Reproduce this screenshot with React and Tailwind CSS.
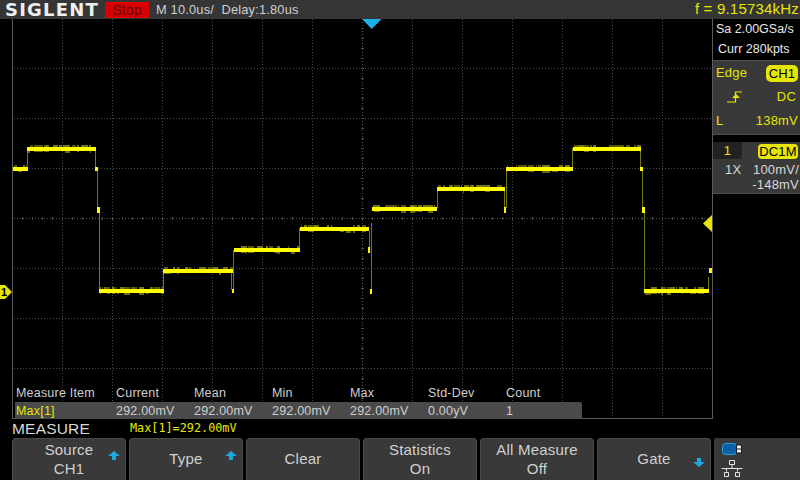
const softkeys = [
  { top: 'Source', bottom: 'CH1', arrow: 'up' },
  { top: 'Type', arrow: 'up' },
  { top: 'Clear' },
  { top: 'Statistics', bottom: 'On' },
  { top: 'All Measure', bottom: 'Off' },
  { top: 'Gate', arrow: 'down' },
]

const measures = [
  { w: 'w-[100px]', head: 'Measure Item', value: 'Max[1]', yellow: true },
  { w: 'w-[78px]', head: 'Current', value: '292.00mV' },
  { w: 'w-[78px]', head: 'Mean', value: '292.00mV' },
  { w: 'w-[78px]', head: 'Min', value: '292.00mV' },
  { w: 'w-[78px]', head: 'Max', value: '292.00mV' },
  { w: 'w-[78px]', head: 'Std-Dev', value: '0.00yV' },
  { w: 'w-[60px]', head: 'Count', value: '1' },
]

// bright parts of the trace: [x1, x2, top, height]
const levels = [
  [13, 28, 167, 4], [27, 96, 147, 4], [95, 98, 167, 4], [97, 100, 207, 6], [99, 164, 289, 4],
  [163, 233, 269, 4], [232, 234, 289, 4], [234, 300, 248, 4], [300, 369, 227, 4], [368, 370, 247, 6],
  [370, 372, 289, 5], [372, 437, 207, 4], [437, 505, 187, 4], [504, 506, 207, 6], [506, 573, 167, 4],
  [573, 641, 147, 4], [640, 643, 167, 4], [642, 645, 207, 6], [644, 709, 289, 4], [709, 712, 268, 5],
]

// dim vertical edges: [x, y1, y2]
const edges = [
  [27, 147, 170], [95, 147, 168], [97, 168, 208], [99, 208, 290], [163, 270, 290], [231, 273, 290],
  [233, 250, 290], [299, 228, 250], [369, 231, 248], [371, 223, 290], [437, 188, 208], [504, 190, 208],
  [506, 168, 208], [572, 148, 168], [640, 148, 168], [642, 170, 208], [644, 208, 290], [708, 277, 290],
]

// fake acquisition noise, same every render
function noise() {
  const out = []
  let seed = 7
  const next = () => {
    seed = (seed * 9301 + 49297) % 233280
    return seed / 233280
  }
  levels.forEach(([x1, x2, top, h]) => {
    if (x2 - x1 < 8) return
    let x = x1 + 1
    while (x < x2 - 1) {
      const w = Math.min(1 + Math.floor(next() * 6), x2 - x)
      if (next() > 0.2) out.push([x, top - 2, w, 2, next() > 0.5 ? '#77770f' : '#55550c'])
      if (next() > 0.6) out.push([x, top + h, w, next() > 0.6 ? 2 : 1, '#66660d'])
      x += w + Math.floor(next() * 3)
    }
  })
  return out
}

const specks = noise()

function Grid() {
  const vert = [62, 112, 162, 212, 262, 312, 412, 462, 512, 562, 612, 662]
  const horiz = [68, 118, 168, 268, 318, 368]
  const ticksX = Array.from({ length: 69 }, (_, i) => 22 + i * 10)
  const ticksY = Array.from({ length: 39 }, (_, i) => 28 + i * 10)
  return (
    <svg width="800" height="480" className="block">
      {vert.map(x => (
        <line key={x} x1={x + 0.5} x2={x + 0.5} y1="19" y2="418" stroke="#484848" strokeDasharray="1 2" />
      ))}
      {horiz.map(y => (
        <line key={y} x1="14" x2="712" y1={y + 0.5} y2={y + 0.5} stroke="#484848" strokeDasharray="1 2" />
      ))}
      <line x1="14" x2="712" y1="218.500" y2="218.500" stroke="#505050" strokeDasharray="1 2" />
      <line x1="362.500" x2="362.500" y1="19" y2="418" stroke="#505050" strokeDasharray="1 2" />
      {ticksX.map(x => (
        <rect key={x} x={x} y="217" width="1" height="3" fill="#484848" />
      ))}
      {ticksY.map(y => (
        <rect key={y} x="361" y={y} width="3" height="1" fill="#484848" />
      ))}
      {edges.map(([x, y1, y2], i) => (
        <rect key={i} x={x} y={y1} width="1" height={y2 - y1} fill="#77770f" />
      ))}
      {specks.map(([x, y, w, h, c], i) => (
        <rect key={i} x={x} y={y} width={w} height={h} fill={c} />
      ))}
      {levels.map(([x1, x2, top, h], i) => (
        <rect key={i} x={x1} y={top} width={x2 - x1} height={h} fill="#ffff00" />
      ))}
      <path d="M362 19h19.500l-9.750 10z" fill="#1cb0e8" />
      <path d="M712 215v17l-9-8.500z" fill="#e6e600" />
      <path d="M0 285h5l7 7-7 7H0z" fill="#e6e600" />
      <text x="1" y="296" fontSize="11" fontWeight="700" fontFamily="Liberation Sans, sans-serif" fill="#000">1</text>
    </svg>
  )
}

function Arrow({ dir }) {
  if (dir === 'up') {
    return (
      <svg width="12" height="9" viewBox="0 0 12 9" className="absolute right-[5px] top-[12px]">
        <path d="M6 0l6 5H8v4H4V5H0z" fill="#1ea7df" />
      </svg>
    )
  }
  return (
    <svg width="12" height="9" viewBox="0 0 12 9" className="absolute right-[5px] top-[19px]">
      <path d="M6 9l6-5H8V0H4v4H0z" fill="#1ea7df" />
    </svg>
  )
}

function Softkey({ top, bottom, arrow }) {
  return (
    <div className="relative w-[114px] h-[42px] pb-[2px] bg-[#393939] rounded-t-[4px] border border-b-0 border-[#4a4a4a] flex flex-col items-center justify-center text-[15px] leading-[19px] text-[#d0d0d0]">
      <span>{top}</span>
      {bottom && <span>{bottom}</span>}
      {arrow && <Arrow dir={arrow} />}
    </div>
  )
}

export default function App() {
  return (
    <div className="relative w-[800px] h-[480px] overflow-hidden bg-black text-[#d8d8d8] font-['Liberation_Sans',sans-serif] tracking-[0.2px]">
      {/* waveform canvas */}
      <div className="absolute inset-0">
        <Grid />
      </div>

      <div className="relative w-[800px] h-[480px] flex flex-col">
        {/* header */}
        <div className="h-[19px] shrink-0 bg-[#353535] flex items-center">
          <span className="ml-[5px] w-[100px] text-[18px] leading-[19px] font-bold text-[#eeeeee] tracking-[1.200px] font-['DejaVu_Sans',sans-serif]">SIGLENT</span>
          <span className="w-[44px] h-[16px] bg-[#d80000] text-[#5a0000] text-[14px] leading-[16px] text-center">Stop</span>
          <span className="ml-[7px] text-[12.8px] text-[#d0d0d0] whitespace-pre">M 10.0us/  Delay:1.80us</span>
          <span className="ml-auto mr-[1px] text-[15px] text-[#e6e600]">f = 9.15734kHz</span>
        </div>

        <div className="h-[400px] shrink-0 flex">
          <div className="flex-1 flex flex-col">
            <div className="flex-1 ml-[12px] w-[701px] border-l border-r border-b border-[#5a5a5a] flex flex-col justify-end">
              <div className="flex text-[12.5px] leading-[17px] pl-[3px] text-[#cfcfcf]">
                {measures.map(m => (
                  <span key={m.head} className={`${m.w} shrink-0`}>{m.head}</span>
                ))}
              </div>
              <div className="flex text-[12.5px] leading-[19px] ml-[2px] pl-[1px] w-[567px] h-[17px] -mb-px bg-[#4a4a4a] rounded-tr-[2px]">
                {measures.map(m => (
                  <span key={m.head} className={`${m.w} shrink-0 ${m.yellow ? 'text-[#e6e600]' : 'text-[#cfcfcf]'}`}>{m.value}</span>
                ))}
              </div>
            </div>
          </div>

          {/* right side panels */}
          <div className="w-[87px] flex flex-col bg-black">
            <div className="h-[41px] text-[12.5px] leading-[20px] text-[#e8e8e8] pl-[3px] tracking-normal">
              <div>Sa 2.00GSa/s</div>
              <div className="pl-[2px]">Curr 280kpts</div>
            </div>
            <div className="h-[75px] bg-[#393939] border-t border-b border-[#4f4f4f] text-[#e6e600] text-[13px]">
              <div className="flex justify-between items-center h-[24px] pl-[3px] pr-[2px]">
                <span>Edge</span>
                <span className="w-[32px] h-[17px] bg-[#e6e600] text-black rounded-[5px] text-center leading-[17px]">CH1</span>
              </div>
              <div className="flex justify-between items-center h-[24px] pr-[4px]">
                <svg width="16" height="12" viewBox="0 0 16 12" className="ml-[14px]">
                  <path d="M0 11h8.500V1H15" fill="none" stroke="#e6e600" strokeWidth="1.200" />
                  <path d="M5 7h8L9 3z" fill="#e6e600" />
                </svg>
                <span>DC</span>
              </div>
              <div className="flex justify-between items-center h-[24px] pl-[3px] pr-[2px]">
                <span>L</span>
                <span>138mV</span>
              </div>
            </div>
            <div className="h-[7px] shrink-0" />
            <div className="h-[52px] bg-[#393939] border-b border-[#4f4f4f] text-[13px] leading-[15px]">
              <div className="flex h-[18px] items-start">
                <span className="w-[29px] h-[17px] bg-[#222222] text-[#e6e600] text-center leading-[17px] rounded-br-[3px]">1</span>
                <span className="ml-auto mt-[2px] mr-[2px] w-[40px] h-[15px] bg-[#e6e600] text-black rounded-[4px] text-center">DC1M</span>
              </div>
              <div className="flex justify-between pl-[12px] pr-[1px] pt-[2px]">
                <span>1X</span>
                <span>100mV/</span>
              </div>
              <div className="text-right pr-[1px]">-148mV</div>
            </div>
          </div>
        </div>

        {/* menu title */}
        <div className="h-[19px] flex items-center shrink-0">
          <span className="ml-[12px] w-[78px] text-[15.500px] text-[#d8d8d8]">MEASURE</span>
          <span className="ml-[40px] text-[11.8px] text-[#e6e600] font-['DejaVu_Sans_Mono',monospace] tracking-normal">Max[1]=292.00mV</span>
        </div>

        {/* softkeys */}
        <div className="h-[42px] shrink-0 flex pl-[12px] gap-[3px]">
          {softkeys.map(k => <Softkey key={k.top} {...k} />)}
          <div className="w-[86px] h-[42px] bg-[#393939] rounded-tl-[2px] relative">
            <svg width="20" height="12" viewBox="0 0 20 12" className="absolute left-[8px] top-[5px]">
              <rect x="0.500" y="0.500" width="14" height="11" rx="3" fill="#0f5ea8" stroke="#1ea7df" />
              <rect x="14" y="1.500" width="6" height="9" fill="#1c1c1c" />
              <rect x="15" y="2.500" width="4" height="3" fill="#eeeeee" />
              <rect x="15" y="6.500" width="4" height="3" fill="#eeeeee" />
            </svg>
            <svg width="22" height="18" viewBox="0 0 22 18" className="absolute left-[7px] top-[22px]">
              <path d="M8.500.5h5v4h-5zM11 5v3M.5 8.500h21M5.500 8.500v3M16.500 8.500v3M3.500 12.500h4v4h-4zM14.500 12.500h4v4h-4z" fill="none" stroke="#e8e8e8" />
            </svg>
          </div>
        </div>
      </div>
    </div>
  )
}
